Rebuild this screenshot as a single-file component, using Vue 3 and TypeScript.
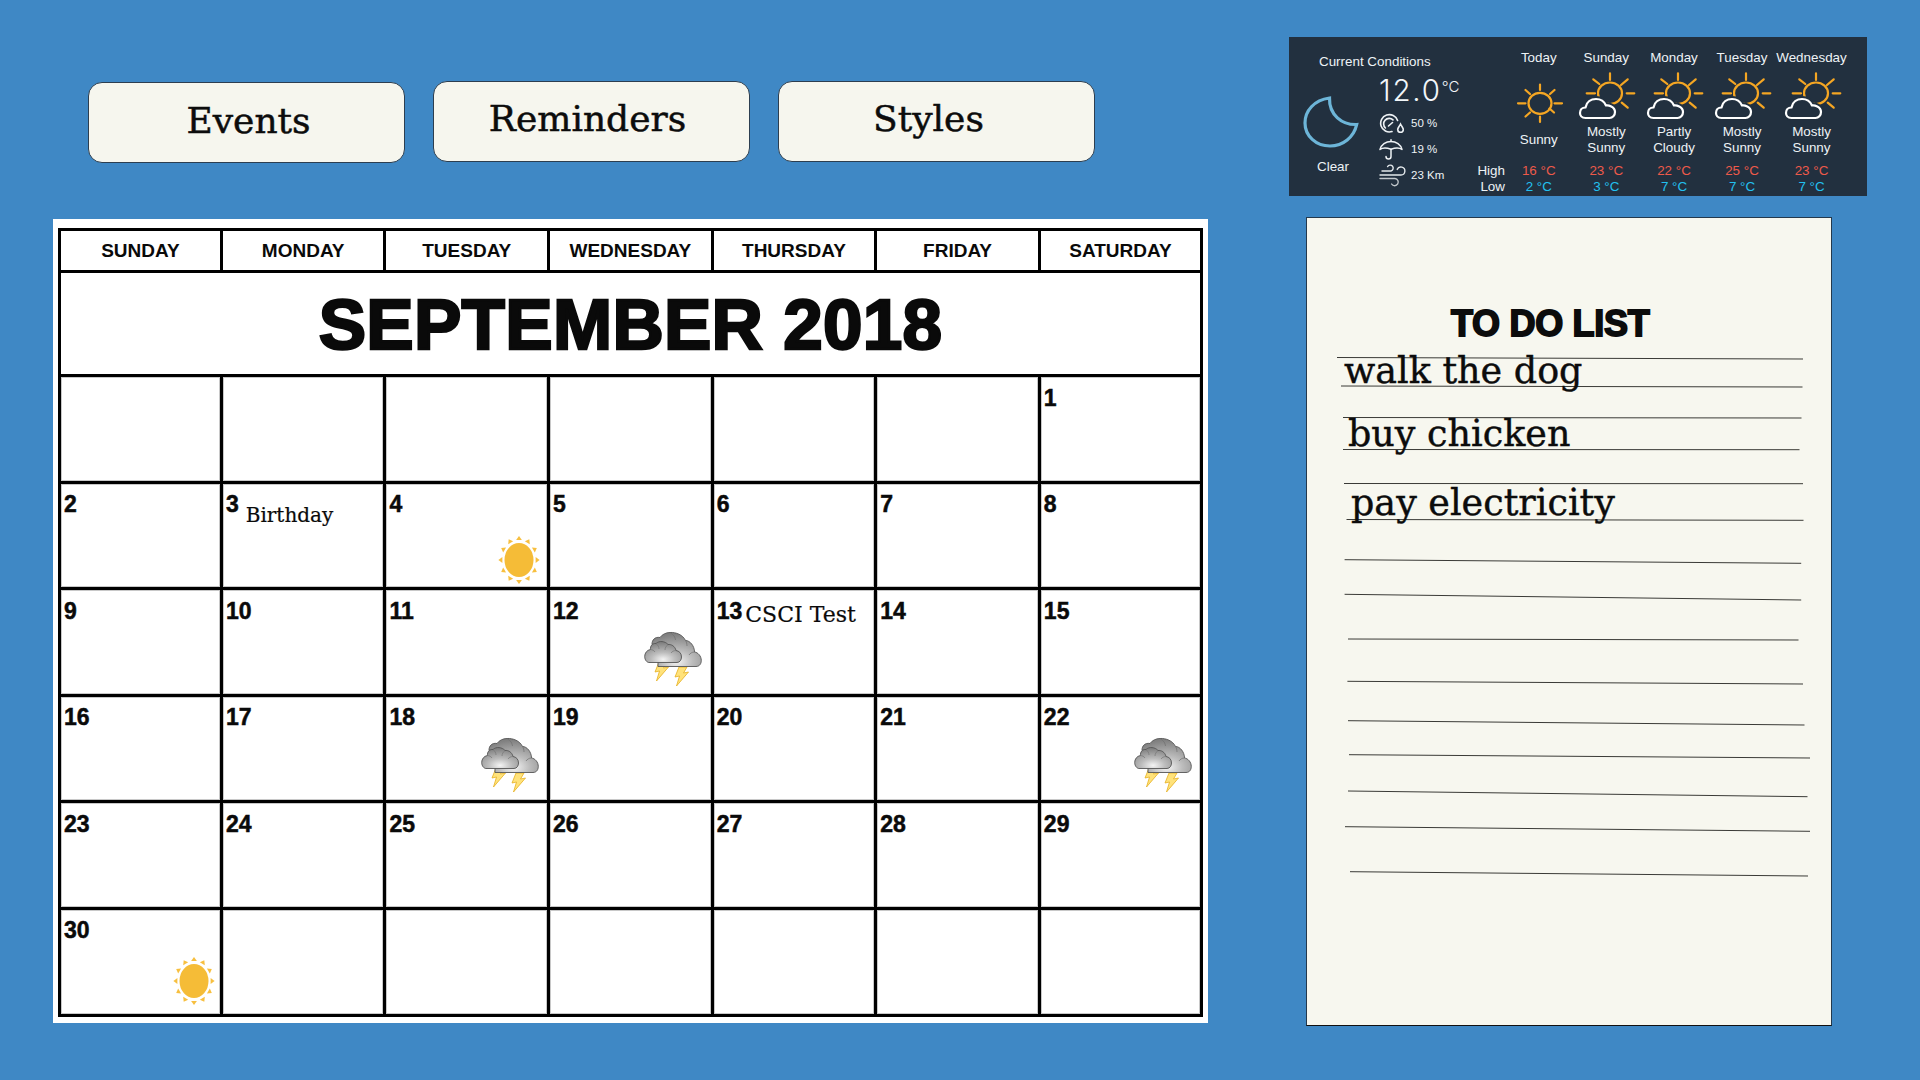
<script setup lang="ts">
type Icon = 'sun' | 'storm'

interface Day {
  num?: number
  note?: string
  noteTop?: number
  noteGap?: number
  noteSize?: number
  icon?: Icon
  right?: number
  bottom?: number
}

const tabs = ['Events', 'Reminders', 'Styles']
const weekdays = ['SUNDAY', 'MONDAY', 'TUESDAY', 'WEDNESDAY', 'THURSDAY', 'FRIDAY', 'SATURDAY']

const extras: Record<number, Partial<Day>> = {
  3: { note: 'Birthday', noteTop: 12, noteGap: 7, noteSize: 20 },
  4: { icon: 'sun', right: 7, bottom: 2 },
  12: { icon: 'storm', right: 9, bottom: 7 },
  13: { note: 'CSCI Test', noteTop: 5, noteGap: 3, noteSize: 22 },
  18: { icon: 'storm', right: 8, bottom: 7 },
  22: { icon: 'storm', right: 8, bottom: 7 },
  30: { icon: 'sun', right: 5, bottom: 8 }
}

const days: Day[] = []
for (let i = 0; i < 6; i++) days.push({})
for (let n = 1; n <= 30; n++) days.push({ num: n, ...extras[n] })
for (let i = 0; i < 6; i++) days.push({})

// small triangles round the calendar sun
const rays = Array.from({ length: 12 }, (_, i) => {
  const a = (i * Math.PI) / 6
  const ox = Math.sin(a)
  const oy = -Math.cos(a)
  const x = 21 + ox * 16.6
  const y = 25 + oy * 20
  const tip = `${x + ox * 4},${y + oy * 4}`
  const l = `${x - oy * 2.9},${y + ox * 2.9}`
  const r = `${x + oy * 2.9},${y - ox * 2.9}`
  return `${tip} ${l} ${r}`
})

const forecast = [
  { day: 'Today', cond: ['Sunny'], high: '16 °C', low: '2 °C', width: 67.5, clear: true },
  { day: 'Sunday', cond: ['Mostly', 'Sunny'], high: '23 °C', low: '3 °C', width: 67.5, clear: false },
  { day: 'Monday', cond: ['Partly', 'Cloudy'], high: '22 °C', low: '7 °C', width: 68, clear: false },
  { day: 'Tuesday', cond: ['Mostly', 'Sunny'], high: '25 °C', low: '7 °C', width: 68, clear: false },
  { day: 'Wednesday', cond: ['Mostly', 'Sunny'], high: '23 °C', low: '7 °C', width: 71, clear: false }
]

const todos = [
  { text: 'walk the dog', left: 37, top: 5 },
  { text: 'buy chicken', left: 41, top: 19 },
  { text: 'pay electricity', left: 44, top: 25 }
]

// ruled lines, slightly crooked as in a hand-drawn sheet (x1, y1, x2, y2)
const rules = [
  [30, 139.5, 496, 141],
  [34, 168, 495.5, 169],
  [36, 199.5, 494.5, 200],
  [36, 231.5, 492.5, 231.7],
  [37, 265.5, 496, 265.7],
  [39.5, 301.5, 496.5, 302.3],
  [37.6, 341.7, 494.2, 345.3],
  [37.6, 376.3, 494.2, 382],
  [41, 421, 491.5, 422],
  [40.4, 463.3, 496, 466],
  [41, 502.7, 497.5, 507],
  [42, 536.7, 503, 540],
  [41, 573, 500.5, 578.7],
  [38, 608.7, 503, 613.3],
  [43, 653.7, 501, 658]
]
</script>

<template>
  <div class="page">
    <div class="left">
      <div class="tabs">
        <button v-for="t in tabs" :key="t" class="tab" :class="'tab-' + t.toLowerCase()">{{ t }}</button>
      </div>

      <div class="board">
        <div class="calendar">
          <div class="weekdays">
            <div v-for="w in weekdays" :key="w" class="weekday">{{ w }}</div>
          </div>
          <div class="month">SEPTEMBER 2018</div>
          <div class="grid">
            <div v-for="(d, i) in days" :key="i" class="cell">
              <span v-if="d.num" class="num">{{ d.num }}</span>
              <span
                v-if="d.note"
                class="note"
                :style="{ marginTop: d.noteTop + 'px', marginLeft: d.noteGap + 'px', fontSize: d.noteSize + 'px' }"
              >{{ d.note }}</span>

              <svg
                v-if="d.icon === 'sun'"
                class="cell-icon"
                :style="{ right: d.right + 'px', bottom: d.bottom + 'px' }"
                width="42"
                height="50"
                viewBox="0 0 42 50"
              >
                <ellipse cx="21" cy="25" rx="14.5" ry="17" fill="#f5bc37" />
                <polygon v-for="(p, k) in rays" :key="k" :points="p" fill="#f7bf3f" />
              </svg>

              <svg
                v-if="d.icon === 'storm'"
                class="cell-icon"
                :style="{ right: d.right + 'px', bottom: d.bottom + 'px' }"
                width="58"
                height="56"
                viewBox="0 0 58 56"
              >
                <defs>
                  <radialGradient id="cloud" cx="0.5" cy="0.85" r="0.8">
                    <stop offset="0" stop-color="#f4f4f4" />
                    <stop offset="0.4" stop-color="#bdbdbd" />
                    <stop offset="1" stop-color="#808080" />
                  </radialGradient>
                </defs>
                <polygon points="15,31 23,31 19.5,37 24.5,36 12.5,50 15.5,40 11,41" fill="#ffe27a" stroke="#e6b020" stroke-width="0.8" />
                <polygon points="35,36 43,36 39.5,42 44.5,41 32.5,55 35.5,45 31,46" fill="#ffe27a" stroke="#e6b020" stroke-width="0.8" />
                <path
                  d="M14 35.5 L52 35.5 C56 35.5 57.3 32 57.3 29.5 C57.3 25 54 21.5 50.5 21 C50.5 15 46 9.5 41.5 9.5 C39 4 32 1 26 1.5 C22 1.5 18 3.5 16 6.5 C11 5.5 8 9 8 13 L14 31 Z"
                  fill="url(#cloud)"
                  stroke="#555"
                  stroke-width="0.9"
                />
                <path d="M41.5 9.5 C42.5 11 43 13 43 15 M50.5 21 C48 21 46 22.5 45 24 M26 1.5 C30 4 31 6 31.5 9" fill="none" stroke="#6e6e6e" stroke-width="0.7" />
                <path
                  d="M5 31.5 L33 31.5 C36 31.5 37.5 28.5 37.5 26 C37.5 22 35 20 32 19.5 C31 15 27 13 24 13.5 C21 10 15 9.5 12 12.5 C8.5 12 6 15 6.5 18.5 C3 19 0.7 22 0.7 25.5 C0.7 29 3 31.5 5 31.5 Z"
                  fill="url(#cloud)"
                  stroke="#555"
                  stroke-width="0.9"
                />
                <path d="M12 12.5 C14 14 15 16 15 18 M24 13.5 C22 15 21 17 21 19 M6.5 18.5 C8 18.5 10 19.5 11 21 M32 19.5 C30 19.5 28 20.5 27 22" fill="none" stroke="#777" stroke-width="0.7" />
              </svg>
            </div>
          </div>
        </div>
      </div>
    </div>

    <div class="right">
      <div class="weather">
        <div class="current">
          <div class="cur-title">Current Conditions</div>
          <div class="cur-body">
            <div class="cur-moon">
              <svg width="58" height="55" viewBox="0 0 58 55">
                <path
                  d="M27.5 3 C12 5 3 16 3 28 C3 41 14 51 28 51 C41 51 52 42 54.7 29.5 C40 30 27 20 27.5 3 Z"
                  fill="none"
                  stroke="#6db5d8"
                  stroke-width="3.2"
                  stroke-linejoin="miter"
                />
              </svg>
              <div class="cur-clear">Clear</div>
            </div>
            <div class="cur-stats">
              <div class="temp">12.0<span class="temp-unit">°C</span></div>
              <div class="stat">
                <span class="stat-icon">
                  <svg width="25" height="20" viewBox="0 0 25 20" fill="none" stroke="#eef2f5" stroke-width="1.6" stroke-linecap="round">
                    <path d="M13 18.6 A8.7 8.7 0 1 1 18.6 7.5" />
                    <path d="M6.4 15 A5 5 0 1 1 14 6.9" />
                    <path d="M9.5 13 L13.5 9.5" />
                    <path d="M21.5 11 C23 14 24.3 15 24.3 16.6 A2.8 2.8 0 0 1 18.7 16.6 C18.7 15 20 14 21.5 11 Z" />
                  </svg>
                </span>
                <span>50 %</span>
              </div>
              <div class="stat">
                <span class="stat-icon">
                  <svg width="24" height="21" viewBox="0 0 24 21" fill="none" stroke="#eef2f5" stroke-width="1.5" stroke-linecap="round" stroke-linejoin="round">
                    <path d="M12 .8 V2.4" />
                    <path d="M1 10.5 C2 5.5 7 2.4 12 2.4 C17 2.4 22 5.5 23 10.5 C20 8.4 17 8.6 12 10.2 C7 8.6 4 8.4 1 10.5 Z" />
                    <path d="M12 10.2 V17.4 A2.5 2.5 0 0 1 7 17.4" />
                  </svg>
                </span>
                <span>19 %</span>
              </div>
              <div class="stat">
                <span class="stat-icon">
                  <svg width="28" height="23" viewBox="0 0 28 23" fill="none" stroke="#e4e9ec" stroke-width="1.4" stroke-linecap="round">
                    <path d="M3 7 H12 A3 3 0 1 0 8.6 2.6" />
                    <path d="M1 11 H22 A4 4 0 1 0 18.2 5.4" />
                    <path d="M1 14.5 H16 A3.6 3.6 0 1 1 12.6 20" stroke="#c2c8cc" />
                  </svg>
                </span>
                <span>23 Km</span>
              </div>
            </div>
          </div>
        </div>

        <div class="row-labels">
          <div>High</div>
          <div>Low</div>
        </div>

        <div
          v-for="f in forecast"
          :key="f.day"
          class="fc"
          :style="{ width: f.width + 'px' }"
        >
          <div class="fc-day">{{ f.day }}</div>
          <svg class="fc-icon" width="62" height="58" viewBox="0 0 62 58" fill="none" stroke-linecap="round">
            <g v-if="f.clear" stroke="#f5a623" stroke-width="2.2">
              <ellipse cx="32" cy="37.3" rx="11.5" ry="10.5" />
              <path d="M32 18.5 V24 M32 50.5 V56 M10 37.3 H17.5 M46.5 37.3 H54 M17.5 24 L22 28 M46 46.5 L41.5 42.5 M46.5 24 L42 28 M17.5 50.5 L22 46.5" />
            </g>
            <g v-else>
              <g stroke="#f5a623" stroke-width="2.2">
                <ellipse cx="35" cy="27.3" rx="12" ry="10.8" />
                <path d="M35 7.3 V14 M51.7 27.3 H59.3 M11.7 27.3 H20 M46 19 L52.7 13.3 M18.3 13.3 L24.3 18 M46.7 36.7 L52.7 41.7" />
              </g>
              <path
                d="M10.5 52 C6.5 52 5 49 5 47 C5 44 7 41.5 10.5 41.5 C11.5 36 16 33 21 33 C26 33 29.5 36 31 39.5 C33 39 40 40.5 40 46 C40 49.5 37.5 52 34.5 52 Z"
                fill="#22303f"
                stroke="#22303f"
                stroke-width="6"
              />
              <path
                d="M10.5 52 C6.5 52 5 49 5 47 C5 44 7 41.5 10.5 41.5 C11.5 36 16 33 21 33 C26 33 29.5 36 31 39.5 C33 39 40 40.5 40 46 C40 49.5 37.5 52 34.5 52 Z"
                stroke="#fff"
                stroke-width="2.2"
                stroke-linejoin="round"
              />
            </g>
          </svg>
          <div class="fc-cond">
            <div v-for="line in f.cond" :key="line">{{ line }}</div>
          </div>
          <div class="fc-high">{{ f.high }}</div>
          <div class="fc-low">{{ f.low }}</div>
        </div>
      </div>

      <div class="todo">
        <svg class="todo-rules" width="526" height="809" viewBox="0 0 526 809">
          <line
            v-for="(r, i) in rules"
            :key="i"
            :x1="r[0]"
            :y1="r[1]"
            :x2="r[2]"
            :y2="r[3]"
            stroke="#3a3a36"
            stroke-width="1"
          />
        </svg>
        <div class="todo-title">TO DO LIST</div>
        <div
          v-for="t in todos"
          :key="t.text"
          class="todo-item"
          :style="{ paddingLeft: t.left + 'px', marginTop: t.top + 'px' }"
        >{{ t.text }}</div>
      </div>
    </div>
  </div>
</template>

<style>
html, body {
  margin: 0;
  background: #3f88c5;
}
</style>

<style scoped>
.page {
  width: 1920px;
  height: 1080px;
  display: flex;
  overflow: hidden;
  background: #3f88c5;
}

.left {
  width: 1289px;
  padding: 81px 0 0 53px;
  box-sizing: border-box;
}

.tabs {
  display: flex;
  align-items: flex-start;
  gap: 28px;
  padding-left: 35px;
}

.tab {
  width: 317px;
  height: 81px;
  padding: 0 0 7px;
  background: #f6f6ee;
  border: 1px solid #2c3e50;
  border-radius: 14px;
  color: #0c0c0c;
  font-family: "DejaVu Serif", serif;
  font-size: 36px;
  text-align: center;
  -webkit-text-stroke: 0.5px #0c0c0c;
}

.tab-events {
  margin-top: 1px;
  padding: 0 0 5px 4px;
}

.tab-reminders {
  padding-right: 8px;
}

.tab-styles {
  padding-right: 16px;
}

.board {
  width: 1155px;
  height: 804px;
  margin-top: 56px;
  padding: 9px 0 0 5px;
  box-sizing: border-box;
  background: #fff;
}

.calendar {
  width: 1145px;
  border: 3px solid #000;
  box-sizing: border-box;
  font-family: "Liberation Sans", Arial, sans-serif;
  color: #0a0a0a;
}

.weekdays {
  display: grid;
  grid-template-columns: 161.9px repeat(5, 163.6px) 1fr;
  height: 42px;
  box-sizing: border-box;
  border-bottom: 3px solid #000;
}

.weekday {
  display: flex;
  align-items: center;
  justify-content: center;
  border-right: 3px solid #000;
  font-size: 19px;
  font-weight: 700;
}

.weekday:last-child {
  border-right: 0;
}

.month {
  height: 104px;
  box-sizing: border-box;
  border-bottom: 3px solid #000;
  text-align: center;
  font-size: 71px;
  font-weight: 700;
  line-height: 104px;
  letter-spacing: 0.3px;
  -webkit-text-stroke: 2.5px #0a0a0a;
}

.grid {
  display: grid;
  grid-template-columns: 161.9px repeat(5, 163.6px) 1fr;
  grid-template-rows: repeat(5, 106.6px) 104px;
}

.cell {
  position: relative;
  display: flex;
  align-items: flex-start;
  padding: 7.5px 0 0 3px;
  box-sizing: border-box;
  border-right: 3px solid #000;
  border-bottom: 3px solid #000;
  box-shadow: inset 0 0 0 1px #c8c8c8;
  min-width: 0;
}

.cell:nth-child(7n) {
  border-right: 0;
}

.cell:nth-last-child(-n + 7) {
  border-bottom: 0;
}

.num {
  font-size: 23px;
  font-weight: 700;
  line-height: 26px;
  -webkit-text-stroke: 0.5px #0a0a0a;
}

.note {
  font-family: "DejaVu Serif", serif;
  line-height: 24px;
  white-space: nowrap;
  -webkit-text-stroke: 0.2px #0a0a0a;
}

.cell-icon {
  position: absolute;
}

.right {
  padding-top: 37px;
}

.weather {
  display: flex;
  width: 578px;
  height: 159px;
  background: #22303f;
  font-family: "Liberation Sans", Arial, sans-serif;
  font-size: 13.4px;
  line-height: 16px;
  color: #eef3f6;
}

.current {
  width: 188px;
  padding-top: 16.5px;
  box-sizing: border-box;
}

.cur-title {
  padding-left: 30px;
  font-size: 13.4px;
}

.cur-body {
  display: flex;
}

.cur-moon {
  width: 78px;
  padding: 25.5px 0 0 13px;
  box-sizing: border-box;
}

.cur-moon svg {
  display: block;
}

.cur-clear {
  width: 62px;
  margin-top: 8.5px;
  text-align: center;
}

.cur-stats {
  padding: 5px 0 0 12px;
}

.temp {
  font-family: Inter, "Liberation Sans", sans-serif;
  font-weight: 300;
  font-size: 29.5px;
  line-height: 30px;
  letter-spacing: 1.8px;
  color: #f2f6f9;
  margin-bottom: 5.5px;
  white-space: nowrap;
}

.temp-unit {
  font-size: 15px;
  letter-spacing: 0;
  vertical-align: 9px;
  line-height: 0;
}

.stat {
  display: flex;
  align-items: center;
  height: 26px;
  font-size: 11.5px;
  white-space: nowrap;
}

.stat-icon {
  display: flex;
  width: 32px;
  flex: none;
}

.row-labels {
  width: 28px;
  padding-top: 126px;
  text-align: right;
}

.fc {
  flex: none;
  padding-top: 13px;
  box-sizing: border-box;
  text-align: center;
}

.fc-day {
  height: 16px;
  white-space: nowrap;
}

.fc-icon {
  display: block;
  margin: 0 auto;
}

.fc-cond {
  display: flex;
  flex-direction: column;
  justify-content: center;
  height: 32px;
  margin-bottom: 7px;
}

.fc-high {
  color: #ee5a4a;
}

.fc-low {
  color: #22c0f0;
}

.todo {
  position: relative;
  width: 526px;
  height: 809px;
  margin: 21px 0 0 17px;
  padding-top: 86px;
  box-sizing: border-box;
  background: #f7f7ef;
  border: 1px solid #24394d;
  border-bottom-color: #111;
  color: #0c0c0c;
}

.todo-rules {
  position: absolute;
  left: 0;
  top: 0;
}

.todo-title {
  position: relative;
  padding-left: 144px;
  font-family: "Liberation Sans", Arial, sans-serif;
  font-weight: 700;
  font-size: 36px;
  line-height: 40px;
  letter-spacing: -0.3px;
  -webkit-text-stroke: 1.8px #0c0c0c;
}

.todo-item {
  position: relative;
  font-family: "DejaVu Serif", serif;
  font-size: 36.5px;
  line-height: 44px;
  white-space: nowrap;
  -webkit-text-stroke: 0.4px #0c0c0c;
}
</style>
